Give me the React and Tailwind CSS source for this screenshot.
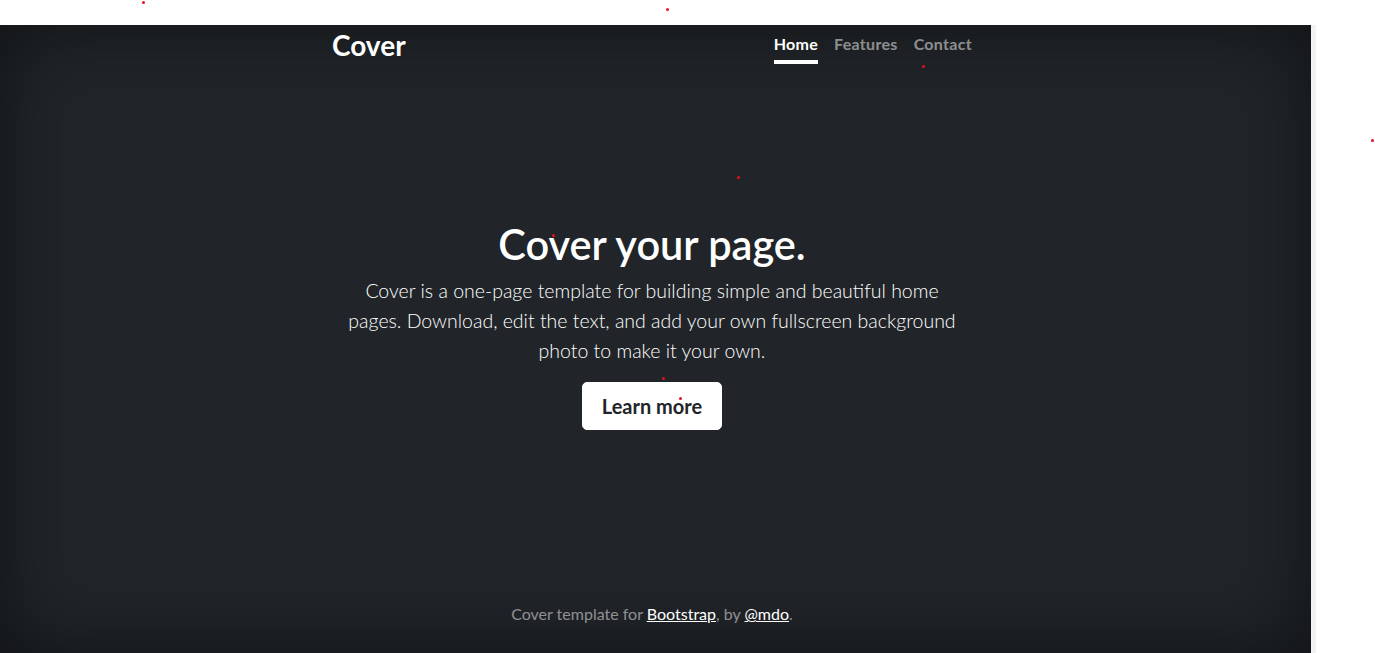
const dots = [
  [143, 2], [667, 9], [923, 66], [1372, 140], [738, 177], [553, 235], [663, 378], [680, 398],
]

function NavLink({ children, active }) {
  return (
    <a
      href="#"
      className={
        active
          ? "py-1 text-[16px] leading-6 font-bold tracking-[0.3px] text-white border-b-4 border-white"
          : "py-1 text-[16px] leading-6 font-bold tracking-[0.3px] text-white/50 border-b-4 border-transparent"
      }
    >
      {children}
    </a>
  )
}

export default function App() {
  return (
    <div className="relative h-[653px] overflow-hidden bg-white pt-[25px] font-['Lato',sans-serif]">
      <div className="flex h-[628px]">
        <div className="w-[1311px] h-full bg-[#212529] shadow-[inset_0_0_5rem_rgba(0,0,0,0.5)] pr-[7px] text-white">
          <div className="mx-auto w-[640px] h-full flex flex-col pt-[3px] pb-[27px]">
            <header className="flex justify-between items-start">
              <h3 className="text-[28px] leading-[34px] font-bold">Cover</h3>
              <nav className="flex gap-4">
                <NavLink active>Home</NavLink>
                <NavLink>Features</NavLink>
                <NavLink>Contact</NavLink>
              </nav>
            </header>

            <main className="mt-[156px] text-center">
              <h1 className="text-[41.5px] leading-[48px] font-semibold mb-2">Cover your page.</h1>
              <p className="text-[19.5px] leading-[30px] font-light mb-4">
                Cover is a one-page template for building simple and beautiful home
                <br />
                pages. Download, edit the text, and add your own fullscreen background
                <br />
                photo to make it your own.
              </p>
              <a
                href="#"
                className="inline-block bg-white text-[#212529] border border-white rounded-[5px] px-[19px] py-2 text-[20px] leading-[30px] font-bold"
              >
                Learn more
              </a>
            </main>

            <footer className="mt-auto text-center text-[16px] leading-6 text-white/50">
              Cover template for{" "}
              <a href="#" className="text-white underline">Bootstrap</a>, by{" "}
              <a href="#" className="text-white underline">@mdo</a>.
            </footer>
          </div>
        </div>
        <div className="w-[5px] h-full bg-[#f2f2f2]" />
      </div>

      {dots.map(([x, y]) => (
        <span
          key={x + "-" + y}
          className="absolute w-[3px] h-[3px] rounded-full bg-[#e8101a]"
          style={{ left: x - 1, top: y - 1 }}
        />
      ))}
    </div>
  )
}
